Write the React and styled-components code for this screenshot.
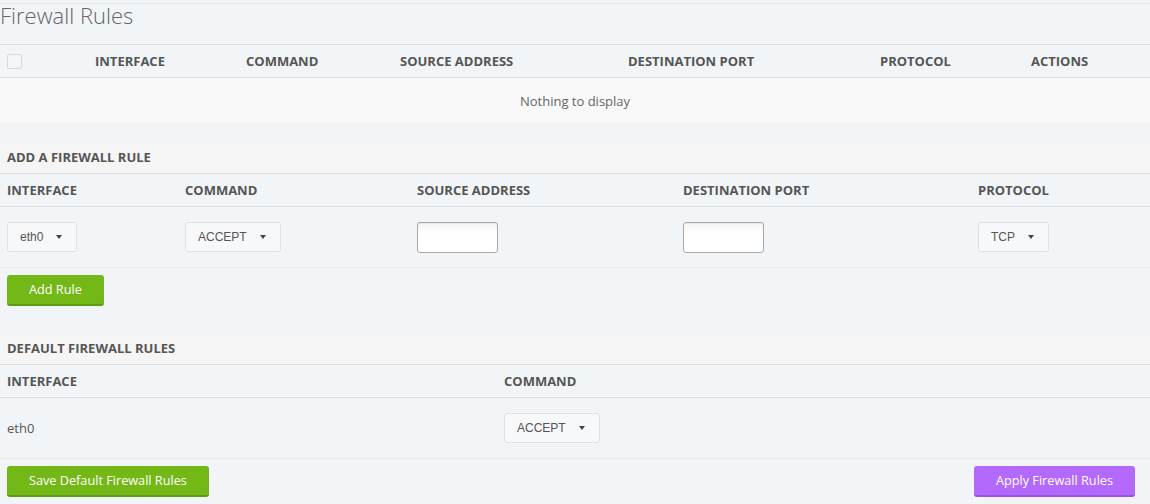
import React from "react";
import styled, { createGlobalStyle } from "styled-components";

const Global = createGlobalStyle`
  html, body { margin: 0; padding: 0; background: #f2f5f8; }
  body { font-family: "Open Sans", "Liberation Sans", sans-serif; color: #555; }
  * { box-sizing: border-box; }
`;

const Page = styled.div`
  padding-top: 3px;
  width: 1150px;
`;

const Title = styled.h1`
  margin: 0;
  border-top: 1px solid #e3e6e9;
  font-size: 22px;
  font-weight: 300;
  line-height: 22px;
  padding-bottom: 18px;
  color: #666;
`;

const Panel = styled.section`
  border-top: ${(p) => (p.$topBorder ? "1px solid #dcdfe2" : "none")};
  margin-bottom: ${(p) => p.$mb || 0}px;
`;

const Row = styled.div`
  display: grid;
  grid-template-columns: ${(p) => p.$cols};
  align-items: center;
  height: ${(p) => p.$h}px;
  border-bottom: ${(p) => p.$border || "none"};
  background: ${(p) => p.$bg || "transparent"};
`;

const HeadCell = styled.div`
  padding: 0 7px;
  font-size: 13px;
  font-weight: 700;
  text-transform: uppercase;
  color: #555;
  white-space: nowrap;
`;

const Cell = styled.div`
  padding: 0 7px;
  font-size: 13px;
  color: #555;
  display: flex;
  align-items: center;
`;

const EmptyText = styled.div`
  grid-column: 1 / -1;
  text-align: center;
  font-size: 13px;
  color: #666;
`;

const Checkbox = styled.span`
  display: block;
  width: 15px;
  height: 15px;
  border: 1px solid #d7dadd;
  border-radius: 2px;
  background: #f3f6f9;
`;

const SelectBox = styled.div`
  display: inline-flex;
  align-items: center;
  height: 30px;
  padding: 0 14px 0 12px;
  border: 1px solid #dde2e7;
  border-radius: 3px;
  background: #f7f8fa;
  font-family: "Liberation Sans", Arial, sans-serif;
  font-size: 12px;
  color: #555;
`;

const Caret = styled.span`
  margin-left: 13px;
  width: 0;
  height: 0;
  border-left: 3.5px solid transparent;
  border-right: 3.5px solid transparent;
  border-top: 4px solid #444;
`;

const TextInput = styled.input`
  display: block;
  width: 81px;
  height: 31px;
  border: 1px solid #a8a8a8;
  border-radius: 3px;
  background: linear-gradient(#f6f6f6, #fff 40%);
  box-shadow: inset 0 1px 1px rgba(0, 0, 0, 0.06);
  margin: 0;
`;

const ButtonRow = styled.div`
  display: flex;
  justify-content: ${(p) => (p.$split ? "space-between" : "flex-start")};
  padding: 7px 15px 0 7px;
  margin-bottom: ${(p) => p.$mb || 0}px;
`;

const Button = styled.button`
  height: 31px;
  padding: 0 22px;
  border: none;
  border-bottom: 2px solid ${(p) => (p.$purple ? "#9a52e3" : "#5e9a12")};
  border-radius: 3px;
  background: ${(p) => (p.$purple ? "#b369fb" : "#73b816")};
  color: #fff;
  font-family: "Open Sans", sans-serif;
  font-size: 12.7px;
  line-height: 29px;
  cursor: pointer;
`;

const LINE = "1px solid #dcdfe2";
const SOFT = "1px solid #e8ebee";

function Select({ value }) {
  return (
    <SelectBox>
      {value}
      <Caret />
    </SelectBox>
  );
}

const COLS1 = "88px 151px 154px 228px 252px 151px 1fr";
const COLS2 = "178px 232px 266px 295px 1fr";
const COLS3 = "497px 1fr";

export default function App() {
  return (
    <>
      <Global />
      <Page>
        <Title>Firewall Rules</Title>
        <Panel $topBorder $mb={18}>
          <Row $cols={COLS1} $h={33} $border={LINE}>
            <HeadCell><Checkbox /></HeadCell>
            <HeadCell>Interface</HeadCell>
            <HeadCell>Command</HeadCell>
            <HeadCell>Source Address</HeadCell>
            <HeadCell>Destination Port</HeadCell>
            <HeadCell>Protocol</HeadCell>
            <HeadCell>Actions</HeadCell>
          </Row>
          <Row $cols="1fr" $h={45} $bg="#f9f9f9">
            <EmptyText>Nothing to display</EmptyText>
          </Row>
        </Panel>

        <Panel>
          <Row $cols="1fr" $h={33} $border={LINE} $bg="#f5f5f5">
            <HeadCell>Add a Firewall Rule</HeadCell>
          </Row>
          <Row $cols={COLS2} $h={33} $border={LINE}>
            <HeadCell>Interface</HeadCell>
            <HeadCell>Command</HeadCell>
            <HeadCell>Source Address</HeadCell>
            <HeadCell>Destination Port</HeadCell>
            <HeadCell>Protocol</HeadCell>
          </Row>
          <Row $cols={COLS2} $h={61} $border={SOFT}>
            <Cell><Select value="eth0" /></Cell>
            <Cell><Select value="ACCEPT" /></Cell>
            <Cell><TextInput type="text" /></Cell>
            <Cell><TextInput type="text" /></Cell>
            <Cell><Select value="TCP" /></Cell>
          </Row>
        </Panel>
        <ButtonRow $mb={26}>
          <Button>Add Rule</Button>
        </ButtonRow>

        <Panel>
          <Row $cols="1fr" $h={33} $border={LINE} $bg="#f5f5f5">
            <HeadCell>Default Firewall Rules</HeadCell>
          </Row>
          <Row $cols={COLS3} $h={33} $border={LINE}>
            <HeadCell>Interface</HeadCell>
            <HeadCell>Command</HeadCell>
          </Row>
          <Row $cols={COLS3} $h={61} $border={SOFT}>
            <Cell>eth0</Cell>
            <Cell><Select value="ACCEPT" /></Cell>
          </Row>
        </Panel>
        <ButtonRow $split>
          <Button>Save Default Firewall Rules</Button>
          <Button $purple>Apply Firewall Rules</Button>
        </ButtonRow>
      </Page>
    </>
  );
}
